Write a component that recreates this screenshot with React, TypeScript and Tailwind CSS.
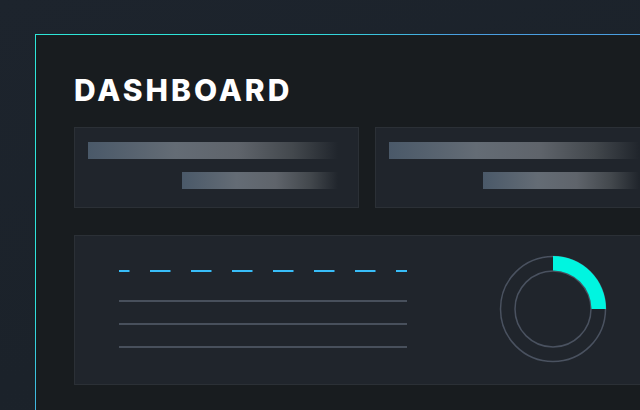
export default function App() {
  const bar =
    "h-[17px] bg-[linear-gradient(90deg,#4a5969_0%,#646c75_35%,#5f646b_60%,#43484d_82%,rgba(38,42,48,0)_100%)]";

  return (
    <div className="w-[640px] h-[410px] overflow-hidden bg-[linear-gradient(160deg,#1d242d_0%,#1b222a_60%,#1c232b_100%)] pl-[35px] pt-[34px]">
      {/* frame with gradient border */}
      <div className="w-[660px] h-[420px] p-px bg-[linear-gradient(135deg,#2de6d8_0px,#2ee2da_190px,#4a9ee0_300px,#4a9ee0_100%)]">
        <div className="w-full h-full bg-[#181c1f] pl-[38px] pt-[40px]">
          <h1 className="font-['Inter',sans-serif] font-extrabold text-[30px] leading-none tracking-[3px] text-white">
            DASHBOARD
          </h1>

          <div className="mt-[22px] flex gap-4">
            <div className="w-[285px] h-[81px] shrink-0 bg-[#20252c] border border-[#2b3036] pl-[13px] pr-[20px] pt-[14px] flex flex-col gap-[13px]">
              <div className={`w-full ${bar}`} />
              <div className={`ml-[94px] ${bar}`} />
            </div>
            <div className="w-[285px] h-[81px] shrink-0 bg-[#20252c] border border-[#2b3036] pl-[13px] pr-[20px] pt-[14px] flex flex-col gap-[13px]">
              <div className={`w-full ${bar}`} />
              <div className={`ml-[94px] ${bar}`} />
            </div>
          </div>

          <div className="mt-[27px] w-[620px] h-[150px] bg-[#20252c] border border-[#2b3036] flex items-start pl-[44px]">
            <div className="w-[288px] pt-[34px] flex flex-col">
              <svg width="288" height="2" className="block">
                <line
                  x1="0"
                  y1="1"
                  x2="288"
                  y2="1"
                  stroke="#38bdf8"
                  strokeWidth="2"
                  strokeDasharray="20.5 20.5"
                  strokeDashoffset="10"
                />
              </svg>
              <div className="mt-[28px] h-[2px] bg-[#48505c]" />
              <div className="mt-[21px] h-[2px] bg-[#48505c]" />
              <div className="mt-[21px] h-[2px] bg-[#48505c]" />
            </div>
            <svg width="120" height="120" viewBox="0 0 120 120" className="ml-[86px] mt-[13px] shrink-0">
              <circle cx="60" cy="60" r="52.5" fill="none" stroke="#4a5260" strokeWidth="1.5" />
              <circle cx="60" cy="60" r="38" fill="none" stroke="#4a5260" strokeWidth="1.5" />
              <path
                d="M60 7 A53 53 0 0 1 113 60 L98.5 60 A38.5 38.5 0 0 0 60 21.5 Z"
                fill="#00f5e0"
              />
            </svg>
          </div>
        </div>
      </div>
    </div>
  );
}
